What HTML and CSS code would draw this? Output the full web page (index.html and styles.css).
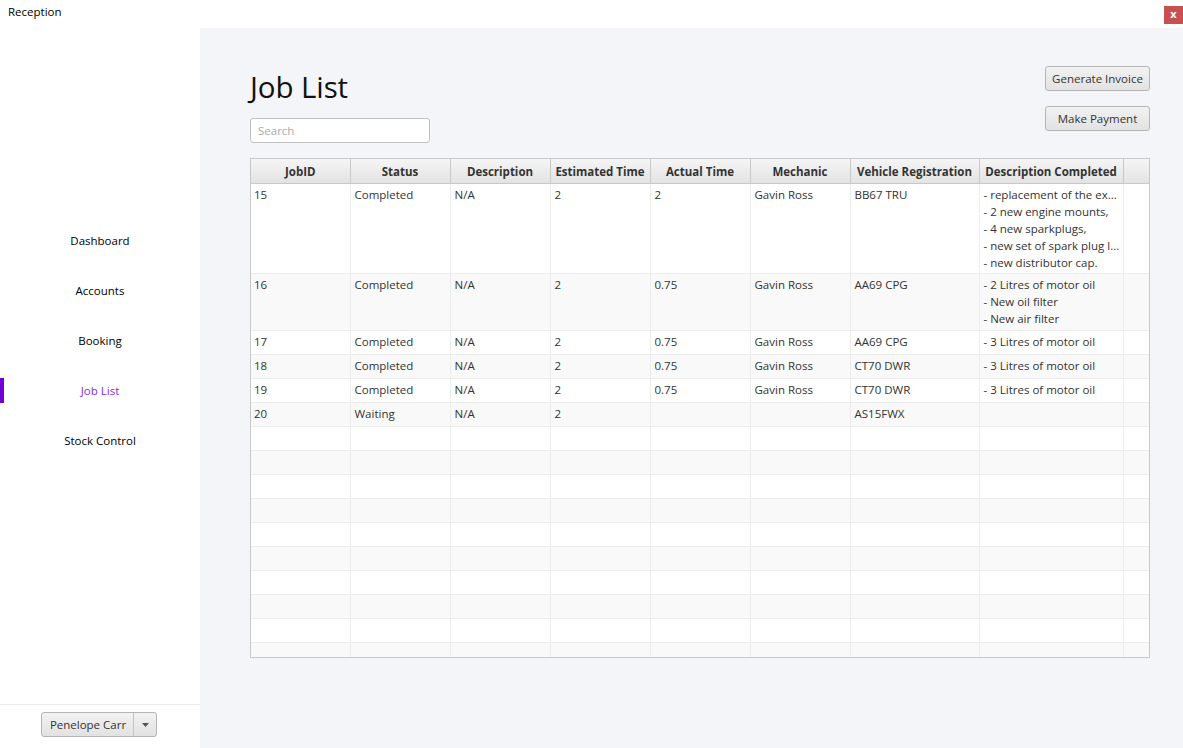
FILE: index.html
```html
<!DOCTYPE html>
<html>
<head>
<meta charset="utf-8">
<link rel="stylesheet" href="styles.css">
</head>
<body>
<div class="window">
  <div class="titlebar">
    <span class="title">Reception</span>
    <span class="close">x</span>
  </div>
  <div class="app">
    <aside class="sidebar">
      <nav class="nav">
        <div class="nav-item">Dashboard</div>
        <div class="nav-item">Accounts</div>
        <div class="nav-item">Booking</div>
        <div class="nav-item active">Job List</div>
        <div class="nav-item">Stock Control</div>
      </nav>
      <div class="user">
        <div class="split">
          <span class="split-label">Penelope Carr</span>
          <span class="split-arrow"><svg width="7" height="4" viewBox="0 0 7 4"><path d="M0 0h7L3.5 4z" fill="#555"/></svg></span>
        </div>
      </div>
    </aside>
    <main class="main">
      <div class="head">
        <div class="head-left">
          <h1 class="page-title">Job List</h1>
          <input class="search" type="text" placeholder="Search">
        </div>
        <div class="head-right">
          <button class="btn">Generate Invoice</button>
          <button class="btn">Make Payment</button>
        </div>
      </div>
      <div class="table-wrap">
        <table class="grid">
          <colgroup>
            <col class="c99"><col class="c100"><col class="c100"><col class="c100"><col class="c100"><col class="c100"><col class="c129"><col class="c144"><col>
          </colgroup>
          <thead>
            <tr><th>JobID</th><th>Status</th><th>Description</th><th>Estimated Time</th><th>Actual Time</th><th>Mechanic</th><th>Vehicle Registration</th><th>Description Completed</th><th></th></tr>
          </thead>
          <tbody>
            <tr class="h5"><td>15</td><td>Completed</td><td>N/A</td><td>2</td><td>2</td><td>Gavin Ross</td><td>BB67 TRU</td><td>- replacement of the ex...<br>- 2 new engine mounts,<br>- 4 new sparkplugs,<br>- new set of spark plug l...<br>- new distributor cap.</td><td></td></tr>
            <tr class="h3"><td>16</td><td>Completed</td><td>N/A</td><td>2</td><td>0.75</td><td>Gavin Ross</td><td>AA69 CPG</td><td>- 2 Litres of motor oil<br>- New oil filter<br>- New air filter</td><td></td></tr>
            <tr><td>17</td><td>Completed</td><td>N/A</td><td>2</td><td>0.75</td><td>Gavin Ross</td><td>AA69 CPG</td><td>- 3 Litres of motor oil</td><td></td></tr>
            <tr><td>18</td><td>Completed</td><td>N/A</td><td>2</td><td>0.75</td><td>Gavin Ross</td><td>CT70 DWR</td><td>- 3 Litres of motor oil</td><td></td></tr>
            <tr><td>19</td><td>Completed</td><td>N/A</td><td>2</td><td>0.75</td><td>Gavin Ross</td><td>CT70 DWR</td><td>- 3 Litres of motor oil</td><td></td></tr>
            <tr><td>20</td><td>Waiting</td><td>N/A</td><td>2</td><td></td><td></td><td>AS15FWX</td><td></td><td></td></tr>
            <tr><td></td><td></td><td></td><td></td><td></td><td></td><td></td><td></td><td></td></tr>
            <tr><td></td><td></td><td></td><td></td><td></td><td></td><td></td><td></td><td></td></tr>
            <tr><td></td><td></td><td></td><td></td><td></td><td></td><td></td><td></td><td></td></tr>
            <tr><td></td><td></td><td></td><td></td><td></td><td></td><td></td><td></td><td></td></tr>
            <tr><td></td><td></td><td></td><td></td><td></td><td></td><td></td><td></td><td></td></tr>
            <tr><td></td><td></td><td></td><td></td><td></td><td></td><td></td><td></td><td></td></tr>
            <tr><td></td><td></td><td></td><td></td><td></td><td></td><td></td><td></td><td></td></tr>
            <tr><td></td><td></td><td></td><td></td><td></td><td></td><td></td><td></td><td></td></tr>
            <tr><td></td><td></td><td></td><td></td><td></td><td></td><td></td><td></td><td></td></tr>
            <tr><td></td><td></td><td></td><td></td><td></td><td></td><td></td><td></td><td></td></tr>
            <tr><td></td><td></td><td></td><td></td><td></td><td></td><td></td><td></td><td></td></tr>
          </tbody>
        </table>
      </div>
    </main>
  </div>
</div>
</body>
</html>
```
FILE: styles.css
```css
* { box-sizing: border-box; }
html, body { margin: 0; padding: 0; }
body {
  width: 1183px;
  height: 748px;
  overflow: hidden;
  font-family: "Open Sans", "Noto Sans", sans-serif;
  font-size: 11.5px;
  color: #333;
  background: #fff;
}
.window { display: flex; flex-direction: column; height: 748px; }
.titlebar {
  height: 28px;
  flex: 0 0 28px;
  display: flex;
  align-items: flex-start;
  justify-content: space-between;
  background: #fff;
}
.title { color: #000; font-size: 11.5px; padding: 4px 0 0 8px; }
.close {
  margin: 6px 0 0 0;
  width: 19px;
  height: 18px;
  background: #c75050;
  color: #fff;
  font-weight: bold;
  font-size: 11px;
  line-height: 16px;
  text-align: center;
}
.app { flex: 1; display: flex; min-height: 0; }
.sidebar {
  width: 200px;
  flex: 0 0 200px;
  background: #fff;
  display: flex;
  flex-direction: column;
}
.nav { flex: 1; display: flex; flex-direction: column; padding-top: 200px; }
.nav-item {
  height: 50px;
  line-height: 25px;
  text-align: center;
  color: #000;
}
.nav-item.active {
  color: #8a2be2;
  box-shadow: inset 4px 0 0 #7000d6;
  height: 25px;
  margin-bottom: 25px;
}
.user {
  height: 44px;
  border-top: 1px solid #ececec;
  display: flex;
  justify-content: center;
  padding-top: 7px;
  padding-right: 2px;
}
.split {
  display: flex;
  height: 25px;
  border: 1px solid #b5b5b5;
  border-radius: 3px;
  background: linear-gradient(#f2f2f2, #e2e2e2);
  color: #333;
}
.split-label { padding: 0 7px 0 8px; line-height: 23px; }
.split-arrow {
  width: 23px;
  border-left: 1px solid #c4c4c4;
  display: flex;
  align-items: center;
  justify-content: center;
}
.main {
  flex: 1;
  background: #f4f5f9;
  padding: 38px 33px 0 50px;
}
.head { display: flex; justify-content: space-between; height: 92px; }
.head-left { display: flex; flex-direction: column; }
.page-title {
  margin: 0;
  font-weight: normal;
  font-size: 29.5px;
  color: #111;
  line-height: 40px;
  margin-top: 1px;
  margin-bottom: 1px;
  letter-spacing: -0.1px;
}
.search {
  margin-top: 10px;
  width: 180px;
  height: 25px;
  border: 1px solid #c2c2c2;
  border-radius: 3px;
  background: #fff;
  font-family: inherit;
  font-size: 11.5px;
  padding: 0 7px;
  outline: none;
}
.search::placeholder { color: #aaa; }
.head-right { display: flex; flex-direction: column; gap: 15px; }
.btn {
  width: 105px;
  height: 25px;
  border: 1px solid #b5b5b5;
  border-radius: 3px;
  background: linear-gradient(#f2f2f2, #e2e2e2);
  font-family: inherit;
  font-size: 11.5px;
  color: #333;
  padding: 0;
}
.table-wrap {
  width: 900px;
  height: 500px;
  border: 1px solid #c8c8c8;
  background: #fff;
  overflow: hidden;
}
.grid {
  width: 898px;
  border-collapse: collapse;
  table-layout: fixed;
}
.c99 { width: 99px; }
.c100 { width: 100px; }
.c129 { width: 129px; }
.c144 { width: 144px; }
.grid th {
  height: 24px;
  padding: 1px 0 0 0;
  font-weight: bold;
  color: #333;
  background: linear-gradient(#f5f5f5, #e3e3e3);
  border-right: 1px solid #c8c8c8;
  border-bottom: 1px solid #c8c8c8;
  white-space: nowrap;
  overflow: hidden;
}
.grid th:last-child { border-right: none; }
.grid td {
  height: 24px;
  padding: 2px 3px 2px 4px;
  vertical-align: top;
  line-height: 17px;
  border-right: 1px solid #ececec;
  border-bottom: 1px solid #ececec;
  white-space: nowrap;
  overflow: hidden;
}
.grid td:first-child { padding-left: 3px; }
.grid td:last-child { border-right: none; }
.grid tbody tr:nth-child(even) td { background: #f9f9f9; }
.grid tr.h5 td { height: 90px; }
.grid tr.h3 td { height: 57px; }
```
